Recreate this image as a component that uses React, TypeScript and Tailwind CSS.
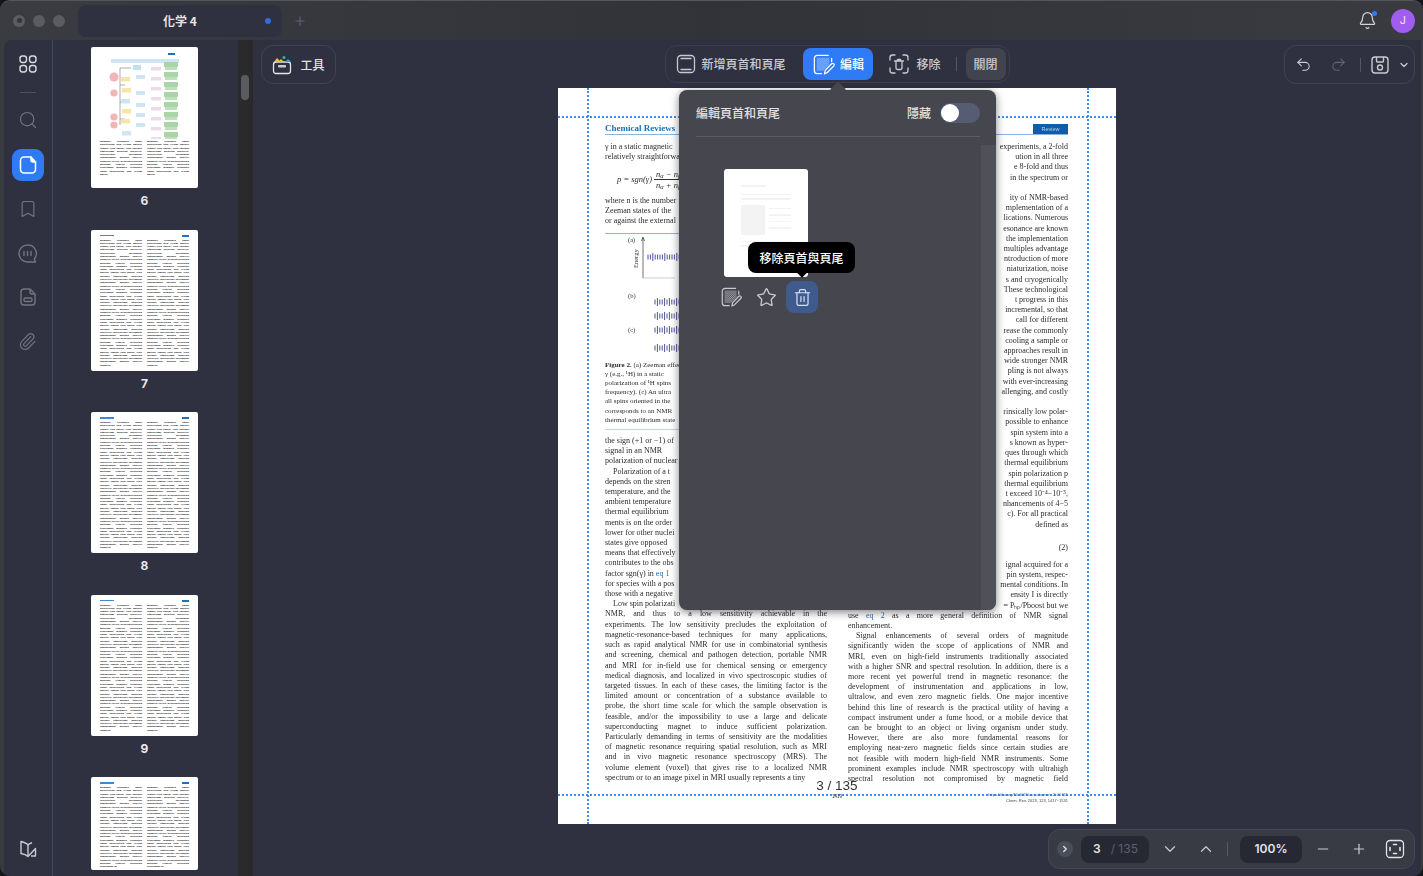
import React from 'react'
import { Bell, Bookmark, ChevronDown, ChevronRight, ChevronUp, Minus, Paperclip, Plus, Redo2, Search, Star, Trash2, Undo2 } from 'lucide-react'

const cjk = "font-['Noto_Sans_CJK_TC','Noto_Sans',sans-serif]"

const leftTop = ['γ in a static magnetic', 'relatively straightforward']
const leftMid = ['where n is the number', 'Zeeman states of the', 'or against the external']
const caption = [
  <><b>Figure 2.</b> (a) Zeeman effect</>,
  <>γ (e.g., ¹H) in a static</>,
  <>polarization of ¹H spins</>,
  <>frequency). (c) An ultra</>,
  <>all spins oriented in the</>,
  <>corresponds to an NMR</>,
  <>thermal equilibrium state</>,
]
const leftBody = [
  'the sign (+1 or −1) of', 'signal in an NMR', 'polarization of nuclear',
  '\u2003Polarization of a t', 'depends on the stren', 'temperature, and the', 'ambient temperature',
  'thermal equilibrium', 'ments is on the order', 'lower for other nuclei', 'states give opposed',
  'means that effectively', 'contributes to the obs',
]
const leftFull = [
  'NMR, and thus to a low sensitivity achievable in the',
  'experiments. The low sensitivity precludes the exploitation of',
  'magnetic-resonance-based techniques for many applications,',
  'such as rapid analytical NMR for use in combinatorial synthesis',
  'and screening, chemical and pathogen detection, portable NMR',
  'and MRI for in-field use for chemical sensing or emergency',
  'medical diagnosis, and localized in vivo spectroscopic studies of',
  'targeted tissues. In each of these cases, the limiting factor is the',
  'limited amount or concentration of a substance available to',
  'probe, the short time scale for which the sample observation is',
  'feasible, and/or the impossibility to use a large and delicate',
  'superconducting magnet to induce sufficient polarization.',
  'Particularly demanding in terms of sensitivity are the modalities',
  'of magnetic resonance requiring spatial resolution, such as MRI',
  'and in vivo magnetic resonance spectroscopy (MRS). The',
  'volume element (voxel) that gives rise to a localized NMR',
  'spectrum or to an image pixel in MRI usually represents a tiny',
]
const rightA = ['experiments, a 2-fold', 'ution in all three', 'e 8-fold and thus', 'in the spectrum or', '\u00a0']
const rightB = [
  'ity of NMR-based', 'mplementation of a', 'lications. Numerous', 'esonance are known', 'the implementation',
  'multiples advantage', 'ntroduction of more', 'niaturization, noise', 's and cryogenically', 'These technological',
  't progress in this', 'incremental, so that', 'call for different', 'rease the commonly', 'cooling a sample or',
  'approaches result in', 'wide stronger NMR', 'pling is not always', 'with ever-increasing', 'allenging, and costly', '\u00a0',
  'rinsically low polar-', 'possible to enhance', 'spin system into a', 's known as hyper-', 'ques through which',
  'thermal equilibrium', 'spin polarization p', 'thermal equilibrium', 't exceed 10⁻⁴−10⁻⁵,', 'nhancements of 4−5',
  'c). For all practical', 'defined as',
]
const rightC = ['ignal acquired for a', 'pin system, respec-', 'mental conditions. In', 'ensity I is directly', '= Pₕₚ/Pboost but we']
const rightFull = [
  '\u2003Signal enhancements of several orders of magnitude',
  'significantly widen the scope of applications of NMR and',
  'MRI, even on high-field instruments traditionally associated',
  'with a higher SNR and spectral resolution. In addition, there is a',
  'more recent yet powerful trend in magnetic resonance: the',
  'development of instrumentation and applications in low,',
  'ultralow, and even zero magnetic fields. One major incentive',
  'behind this line of research is the practical utility of having a',
  'compact instrument under a fume hood, or a mobile device that',
  'can be brought to an object or living organism under study.',
  'However, there are also more fundamental reasons for',
  'employing near-zero magnetic fields since certain studies are',
  'not feasible with modern high-field NMR instruments. Some',
  'prominent examples include NMR spectroscopy with ultrahigh',
  'spectral resolution not compromised by magnetic field',
]

const noise =
  'magnetic resonance signal polarization spin system nuclear sample field energy state thermal equilibrium detection sensitivity spectroscopy instrument enhancement method analysis chemical review hyperpolarization molecule transfer relaxation experiment '

function Line({ children, full }: { children: React.ReactNode; full?: boolean }) {
  return <div className={full ? 'whitespace-nowrap text-justify [text-align-last:justify]' : 'whitespace-nowrap'}>{children}</div>
}

function Blurb({ chars }: { chars: number }) {
  return (
    <div className="flex-1 text-justify font-['Liberation_Serif',serif] text-[2.8px] font-bold leading-[3.3px] text-[#111]">
      {noise.repeat(8).slice(0, chars)}
    </div>
  )
}

function MindMap() {
  const rows = [12, 22, 32, 42, 52, 62, 72, 82]
  return (
    <svg width="107" height="92" viewBox="0 0 107 92" className="block">
      <rect x="20" y="12" width="68" height="4" fill="#cfe6f2" />
      <rect x="42" y="18" width="8" height="5" fill="#bfe0f0" />
      <path d="M29 21V78M29 21H40M29 38H34M29 55H34M29 72H34" stroke="#777" strokeWidth="0.6" fill="none" />
      {[30, 46, 70, 78].map((y, i) => <circle key={y} cx="23" cy={y} r={i === 0 ? 4.5 : 3.6} fill="#f2b5b5" />)}
      {[30, 41, 52, 62, 72, 84].map((y, i) => <rect key={y} x={i % 2 ? 31 : 30} y={y} width="9" height="4.5" fill={i % 3 === 2 ? '#cfe6f2' : '#f7e7a6'} />)}
      {[28, 44, 56, 66, 76].map((y) => <rect key={y} x="45" y={y} width="9" height="4" fill="#cfe6f2" />)}
      {rows.map((y) => <rect key={y} x="60" y={y + 8} width="10" height="3.5" fill="#ecdbe8" />)}
      {rows.map((y) => (
        <g key={y}>
          <rect x="73" y={y + 3} width="14" height="5" fill="#a9d5a8" />
          <rect x="74" y={y + 8} width="12" height="3" fill="#bfe0bd" />
        </g>
      ))}
      <rect x="77" y="6" width="7" height="2" fill="#1e70c1" />
    </svg>
  )
}

function Thumb({ num, first, cut }: { num: number; first?: boolean; cut?: boolean }) {
  const chars = cut ? 760 : 1200
  return (
    <div className="flex flex-col items-center">
      <div className={`flex w-[107px] flex-col overflow-hidden rounded-[2px] bg-white ${cut ? 'h-[93px]' : 'h-[141px]'}`}>
        {first ? (
          <>
            <MindMap />
            <div className="mt-[1px] flex gap-[5px] px-[9px]">
              <Blurb chars={310} />
              <Blurb chars={310} />
            </div>
          </>
        ) : (
          <>
            <div className="flex justify-between px-[9px] pt-[5px]">
              <div className="h-[1.5px] w-[14px] bg-[#3d8ad0]" />
              <div className="h-[2px] w-[7px] bg-[#1e70c1]" />
            </div>
            <div className="mt-[2px] flex gap-[5px] px-[9px]">
              <Blurb chars={chars} />
              <Blurb chars={chars} />
            </div>
          </>
        )}
      </div>
      {!cut && <div className="mt-[6px] font-['Inter',sans-serif] text-[12px] font-bold leading-[13px] text-[#e8e8ea]">{num}</div>}
    </div>
  )
}

function RailIcon({ children, active }: { children: React.ReactNode; active?: boolean }) {
  return (
    <div className={`flex h-8 w-8 items-center justify-center rounded-[9px] ${active ? 'bg-[#2f7bf6] text-white' : 'text-[#72757f]'}`}>
      {children}
    </div>
  )
}

function EditIcon({ size = 24 }: { size?: number }) {
  return (
    <svg width={size} height={size} viewBox="0 0 24 24" fill="none" stroke="currentColor" strokeWidth="1.3">
      <defs>
        <pattern id="dither" width="2" height="2" patternUnits="userSpaceOnUse">
          <rect width="1" height="1" fill="currentColor" stroke="none" />
          <rect x="1" y="1" width="1" height="1" fill="currentColor" stroke="none" />
        </pattern>
      </defs>
      <path d="M17 2.5H5.5a3 3 0 0 0-3 3v13a3 3 0 0 0 3 3H10M20.5 5.5V9" strokeLinecap="round" />
      <path d="M5 5h13v7l-6 6.5H5z" fill="url(#dither)" stroke="none" opacity="0.55" />
      <path d="M13 21.8l.8-3.6 6.7-7a1.6 1.6 0 0 1 2.3 2.2l-6.8 7z" strokeLinejoin="round" />
    </svg>
  )
}

function Divider() {
  return <div className="h-[14px] w-px bg-[#555863]" />
}

function Figure() {
  const ticks = (x0: number, x1: number, y: number) => {
    let d = ''
    for (let x = x0; x < x1; x += 2.4) d += `M${x} ${y - (Math.round(x) % 4 === 0 ? 4 : 2.5)}V${y + (Math.round(x) % 4 === 0 ? 4 : 2.5)}`
    return d
  }
  return (
    <svg width="100" height="127" viewBox="0 0 100 127" className="block">
      <g fontFamily="Liberation Serif, serif" fontSize="6.5" fill="#333">
        <text x="23" y="8">(a)</text>
        <text x="23" y="64">(b)</text>
        <text x="23" y="98">(c)</text>
        <text transform="translate(33 34) rotate(-90)">Energy</text>
      </g>
      <path d="M38 44V4M36.5 7L38 3l1.5 4" stroke="#333" strokeWidth="0.7" fill="none" />
      <path d="M38 44H70" stroke="#999" strokeWidth="0.5" />
      <path d={ticks(43, 76, 23) + ticks(50, 76, 68) + ticks(50, 76, 82) + ticks(50, 76, 96) + ticks(50, 76, 114)} stroke="#3a3f8f" strokeWidth="0.9" />
    </svg>
  )
}

function Page() {
  return (
    <div className="relative flex h-[736px] w-[558px] flex-col bg-white px-[47px] pt-[35px] pr-[48px] font-['Liberation_Serif',serif] text-[8px] leading-[10.2px] text-[#2c2c2c] blur-[0.3px]">
      {/* guides */}
      <div className="absolute left-0 right-0 top-[28px] border-t-2 border-dotted border-[#3f8cf0]" />
      <div className="absolute left-0 right-0 top-[706px] border-t-2 border-dotted border-[#3f8cf0]" />
      <div className="absolute bottom-0 left-[29px] top-0 border-l-2 border-dotted border-[#3f8cf0]" />
      <div className="absolute bottom-0 right-[27px] top-0 border-l-2 border-dotted border-[#3f8cf0]" />

      <div className="flex h-[12px] items-end justify-between border-b border-[#8ab4dc]">
        <div className="text-[9px] font-bold leading-[11px] text-[#1f6fb5]">Chemical Reviews</div>
        <div className="flex h-[10px] w-[35px] items-center justify-center bg-[#0f5ca8] font-['Liberation_Sans',sans-serif] text-[5.5px] text-[#b9d3ec]">Review</div>
      </div>

      <div className="mt-[7px] grid grid-cols-[222px_220px] gap-[21px]">
        <div>
          {leftTop.map((t) => <Line key={t}>{t}</Line>)}
          <div className="flex h-[33.6px] items-center gap-[2px] pl-[12px] text-[8.5px] italic">
            <span>p = sgn(γ)</span>
            <span className="flex flex-col items-center leading-[10px]">
              <span className="border-b border-[#333] px-[2px]">n<sub>α</sub> − n<sub>β</sub></span>
              <span className="px-[2px]">n<sub>α</sub> + n<sub>β</sub></span>
            </span>
          </div>
          {leftMid.map((t) => <Line key={t}>{t}</Line>)}
          <div className="mt-[6px] h-px bg-[#8ab4dc]" />
          <Figure />
          <div className="text-[7px] leading-[9.2px]">
            {caption.map((c, i) => <Line key={i}>{c}</Line>)}
          </div>
          <div className="mb-[6px] mt-[4px] h-px bg-[#c5d7ea]" />
          {leftBody.map((t) => <Line key={t}>{t}</Line>)}
          <Line>factor sgn(γ) in <span className="text-[#2a6db5]">eq 1</span></Line>
          <Line>for species with a pos</Line>
          <Line>those with a negative</Line>
          <Line>{'\u2003'}Low spin polarizati</Line>
          {leftFull.map((t, i) => <Line key={t} full={i < 16}>{t}</Line>)}
        </div>
        <div>
          {rightA.map((t, i) => <div key={i} className="whitespace-nowrap text-right">{t}</div>)}
          {rightB.map((t, i) => <div key={i} className="whitespace-nowrap text-right">{t}</div>)}
          <div className="mt-[13px] text-right leading-[10px]">(2)</div>
          <div className="mt-[7px]">
            {rightC.map((t) => <div key={t} className="whitespace-nowrap text-right">{t}</div>)}
          </div>
          <Line full>use <span className="text-[#2a6db5]">eq 2</span> as a more general definition of NMR signal</Line>
          <Line>enhancement.</Line>
          {rightFull.map((t) => <Line key={t} full>{t}</Line>)}
        </div>
      </div>

      {/* page stamp + footer */}
      <div className="absolute left-0 right-0 top-[690px] text-center font-['Liberation_Sans',sans-serif] text-[13.5px] leading-[16px] text-[#333]">3 / 135</div>
      <div className="absolute left-0 right-0 top-[706px] text-center font-['Liberation_Sans',sans-serif] text-[4.5px] leading-[6px] text-[#333]">1419</div>
      <div className="absolute right-[48px] top-[704px] text-right font-['Liberation_Sans',sans-serif] text-[4px] leading-[5.5px]">
        <div className="text-[#2a6db5]">https://doi.org/10.1021/acs.chemrev.2c00741</div>
        <div className="text-[#444]">Chem. Rev. 2023, 123, 1417−1531</div>
      </div>
    </div>
  )
}

function Popover() {
  return (
    <div className={`absolute left-[426px] top-[50px] h-[520px] w-[317px] rounded-lg bg-[#45464e] shadow-[0_2px_8px_rgba(0,0,0,0.5)] ${cjk}`}>
      <div className="absolute -top-[6px] left-[153px] h-3 w-3 rotate-45 rounded-[2px] bg-[#45464e]" />
      <div className="absolute bottom-0 right-0 top-[55px] w-[15px] rounded-br-lg bg-[#4f5058]" />
      <div className="relative mx-[17px] mr-[16px] flex h-[47px] items-center justify-between border-b border-[#565c6e] text-[12px] font-medium text-[#e2e2e4]">
        <span>編輯頁首和頁尾</span>
        <div className="flex items-center gap-[9px]">
          <span>隱藏</span>
          <div className="flex h-[20px] w-[40px] items-center rounded-full bg-[#565d72] pl-[1px]">
            <div className="h-[18px] w-[18px] rounded-full bg-white" />
          </div>
        </div>
      </div>
      <div className="relative ml-[45px] mt-[32px] w-[84px]">
        <div className="flex h-[108px] w-[84px] flex-col gap-[3px] rounded-[3px] bg-white px-[17px] pt-[16px]">
          <div className="h-[1.5px] w-[25px] bg-[#f3f3f3]" />
          <div className="mt-[4px] h-[1.5px] bg-[#f3f3f3]" />
          <div className="h-[1.5px] bg-[#f3f3f3]" />
          <div className="mt-[2px] flex gap-[4px]">
            <div className="h-[30px] w-[24px] bg-[#f3f3f3]" />
            <div className="flex flex-1 flex-col gap-[5px] pt-[3px]">
              <div className="h-[1.5px] bg-[#f3f3f3]" />
              <div className="h-[1.5px] bg-[#f3f3f3]" />
              <div className="h-[1.5px] bg-[#f3f3f3]" />
              <div className="h-[1.5px] bg-[#f3f3f3]" />
            </div>
          </div>
          <div className="mt-[3px] h-[1.5px] bg-[#f3f3f3]" />
          <div className="h-[1.5px] bg-[#f3f3f3]" />
        </div>
        <div className="mt-[4px] flex h-[32px] w-[102px] -translate-x-[8px] items-center text-[#c9cad0]">
          <div className="flex w-[30px] justify-center"><EditIcon size={22} /></div>
          <div className="ml-[5px] flex w-[30px] justify-center"><Star size={21} strokeWidth={1.5} /></div>
          <div className="ml-[5px] flex h-[32px] w-[32px] items-center justify-center rounded-lg bg-[#3f5a8c] text-[#d6e2f8]">
            <Trash2 size={19} strokeWidth={1.5} />
          </div>
        </div>
        <div className="absolute left-[24px] top-[73px] flex h-[31px] w-[107px] items-center justify-center rounded-lg bg-black text-[12px] font-medium text-white">
          移除頁首與頁尾
          <div className="absolute -bottom-[3px] left-[50px] h-2 w-2 rotate-45 bg-black" />
        </div>
      </div>
    </div>
  )
}

export default function App() {
  return (
    <div className="h-screen w-screen overflow-hidden bg-[#15161a]">
      <div className="flex h-full flex-col overflow-hidden rounded-[10px] border-t border-[#55565c] bg-[#3a3b41]">
        {/* title bar */}
        <div className="flex h-[39px] shrink-0 items-center bg-gradient-to-r from-[#3b3c42] via-[#323338] to-[#3a3b40] pl-[13px] pr-[8px]">
          <div className="flex gap-[8px]">
            <div className="flex h-3 w-3 items-center justify-center rounded-full bg-[#5b5c61]"><div className="h-[5px] w-[5px] rounded-full bg-[#35363b]" /></div>
            <div className="h-3 w-3 rounded-full bg-[#5b5c61]" />
            <div className="h-3 w-3 rounded-full bg-[#5b5c61]" />
          </div>
          <div className={`relative ml-[13px] flex h-[32px] w-[204px] items-center justify-center rounded-lg bg-[#2f3140] text-[12px] font-bold text-[#e6e6e8] ${cjk}`}>
            化学 4
            <div className="absolute right-[11px] top-[13px] h-[6px] w-[6px] rounded-full bg-[#2f6fd8]" />
          </div>
          <Plus size={14} className="ml-[11px] text-[#5d6270]" />
          <div className="ml-auto flex items-center gap-[14px]">
            <div className="relative text-[#d5d5d8]">
              <Bell size={19} strokeWidth={1.5} />
              <div className="absolute right-0 top-0 h-[5px] w-[5px] rounded-full bg-[#2f7bf6]" />
            </div>
            <div className="flex h-6 w-6 items-center justify-center rounded-full bg-[#a15cf0] font-['Inter',sans-serif] text-[11px] text-[#f1e6ff]">J</div>
          </div>
        </div>

        <div className="flex min-h-0 flex-1 pl-[4px] pr-[2px]">
          {/* rail */}
          <div className="flex w-[49px] shrink-0 flex-col items-center rounded-tl-lg border-r border-[#434a5e] bg-[#2f3140] pr-[1px] pt-[8px]">
            <RailIcon>
              <svg width="20" height="20" viewBox="0 0 20 20" fill="none" stroke="#d9dae0" strokeWidth="1.4">
                <rect x="2" y="2" width="6.5" height="6.5" rx="2.4" />
                <rect x="11.5" y="2" width="6.5" height="6.5" rx="2.4" />
                <rect x="2" y="11.5" width="6.5" height="6.5" rx="2.4" />
                <rect x="11.5" y="11.5" width="6.5" height="6.5" rx="2.4" />
              </svg>
            </RailIcon>
            <div className="my-[11.5px] h-px w-4 bg-[#4c4f5c]" />
            <RailIcon><Search size={20} strokeWidth={1.4} /></RailIcon>
            <div className="mt-[13px]">
              <RailIcon active>
                <svg width="20" height="20" viewBox="0 0 20 20" fill="none" stroke="currentColor" strokeWidth="1.5">
                  <path d="M13 2H6a3.500 3.500 0 0 0-3.500 3.500v9A3.500 3.500 0 0 0 6 18h8a3.500 3.500 0 0 0 3.500-3.500V7" strokeLinecap="round" />
                  <path d="M13 2v3a2 2 0 0 0 2 2h2.500z" fill="currentColor" strokeLinejoin="round" />
                </svg>
              </RailIcon>
            </div>
            <div className="mt-[12px]"><RailIcon><Bookmark size={20} strokeWidth={1.4} /></RailIcon></div>
            <div className="mt-[12px]">
              <RailIcon>
                <svg width="21" height="21" viewBox="0 0 21 21" fill="none" stroke="currentColor" strokeWidth="1.4" strokeLinecap="round">
                  <path d="M10.500 2a8.500 8.500 0 1 0 0 17H18.500l-1.200-3a8.500 8.500 0 0 0-6.800-14z" strokeLinejoin="round" />
                  <path d="M7 8.500v4M10.500 8.500v4M14 8.500v4" />
                </svg>
              </RailIcon>
            </div>
            <div className="mt-[12px]">
              <RailIcon>
                <svg width="20" height="20" viewBox="0 0 20 20" fill="none" stroke="currentColor" strokeWidth="1.4">
                  <path d="M12 2H6a3 3 0 0 0-3 3v10a3 3 0 0 0 3 3h8a3 3 0 0 0 3-3V7z" strokeLinejoin="round" />
                  <path d="M12 2v3a2 2 0 0 0 2 2h3" />
                  <rect x="6" y="11" width="8" height="3.500" rx="1.200" />
                </svg>
              </RailIcon>
            </div>
            <div className="mt-[12px]"><RailIcon><Paperclip size={19} strokeWidth={1.4} /></RailIcon></div>
            <div className="mb-[17px] mt-auto text-[#c9cad0]">
              <svg width="20" height="20" viewBox="0 0 20 20" fill="none" stroke="currentColor" strokeWidth="1.400">
                <path d="M3 2.500c3 .8 6 2 7 3.500v11.500c-1.500-1.500-4-2.500-7-3z" strokeLinejoin="round" />
                <path d="M10 6c1-1 2.500-1.800 4-2.200M13 17h4.500V9.500L10 17.500" strokeLinejoin="round" />
              </svg>
            </div>
          </div>

          {/* thumbnails */}
          <div className="flex w-[185px] shrink-0 flex-col items-center overflow-hidden bg-[#2f3140] pr-[2px] pt-[7px]">
            <div className="flex flex-col items-center gap-[22.5px]">
              <Thumb num={6} first />
              <Thumb num={7} />
              <Thumb num={8} />
              <Thumb num={9} />
              <Thumb num={10} cut />
            </div>
          </div>
          <div className="w-[15px] shrink-0 bg-[#2a2a2c] pl-[3px] pt-[35px]">
            <div className="h-[25px] w-2 rounded-full bg-[#5a5b60]" />
          </div>

          {/* main */}
          <div className="relative flex min-w-0 flex-1 flex-col items-center bg-[#2f3140]">
            <div className="grid h-[48px] w-full shrink-0 grid-cols-[1fr_auto_1fr] items-start pl-2 pr-[6px] pt-[5px]">
              <div className={`flex h-[39px] w-[75px] items-center justify-center gap-[8px] rounded-xl border border-[#3f4352] text-[12px] font-medium text-[#e2e3e7] ${cjk}`}>
                <svg width="20" height="20" viewBox="0 0 20 20" fill="none">
                  <rect x="1.500" y="7" width="17" height="11.500" rx="2.500" stroke="#e6e6ea" strokeWidth="1.300" />
                  <rect x="6" y="10" width="8" height="2.500" rx="0.800" fill="#c9cad0" />
                  <path d="M2 7l3-4 2 2 1 2z" fill="#f2c230" />
                  <circle cx="12" cy="2.500" r="1.500" fill="#22c29a" />
                  <path d="M13 7l3-3 3 3z" fill="#2aa5e8" />
                  <path d="M6 7l3-3 3 3z" fill="#f2c230" />
                </svg>
                工具
              </div>
              <div className={`flex h-[38px] w-[345px] -translate-x-[1px] items-center rounded-xl border border-[#3a3e4d] pl-[10px] pr-[3px] text-[12px] font-medium text-[#c9cad0] ${cjk}`}>
                <svg width="20" height="20" viewBox="0 0 20 20" fill="none" stroke="currentColor" strokeWidth="1.300">
                  <rect x="1.500" y="1.500" width="17" height="17" rx="3.500" />
                  <path d="M5 4.500h10M5 15.500h10" strokeLinecap="round" />
                </svg>
                <span className="ml-[6px]">新增頁首和頁尾</span>
                <div className="ml-[17px] flex h-8 w-[71px] items-center justify-center gap-[5px] rounded-lg bg-[#2f7bf6] text-white">
                  <EditIcon size={23} />
                  編輯
                </div>
                <svg className="ml-[15px]" width="22" height="22" viewBox="0 0 22 22" fill="none" stroke="currentColor" strokeWidth="1.300" strokeLinecap="round">
                  <path d="M2 7V4.500A2.500 2.500 0 0 1 4.500 2H7M15 2h2.500A2.500 2.500 0 0 1 20 4.500V7M20 15v2.500a2.500 2.500 0 0 1-2.500 2.500H15M7 20H4.500A2.500 2.500 0 0 1 2 17.500V15" />
                  <path d="M6.500 8h9M8 8v7a1.500 1.500 0 0 0 1.500 1.500h3A1.500 1.500 0 0 0 14 15V8M9.500 8V6.500h3V8" strokeLinejoin="round" />
                </svg>
                <span className="ml-[6px]">移除</span>
                <div className="ml-[15px]"><Divider /></div>
                <div className="ml-[9px] flex h-8 w-10 items-center justify-center rounded-lg bg-[#41444f]">關閉</div>
              </div>
              <div className="flex h-[39px] w-[131px] items-center justify-self-end rounded-xl border border-[#3f4352] pl-[10px] text-[#c9cad0]">
                <Undo2 size={17} strokeWidth={1.5} />
                <Redo2 size={17} strokeWidth={1.5} className="ml-[18px] text-[#62656f]" />
                <div className="ml-[13px]"><Divider /></div>
                <svg className="ml-[9px]" width="20" height="20" viewBox="0 0 20 20" fill="none" stroke="currentColor" strokeWidth="1.400">
                  <path d="M5 2h10a3 3 0 0 1 3 3v10a3 3 0 0 1-3 3H5a3 3 0 0 1-3-3V5a3 3 0 0 1 3-3z" />
                  <path d="M6.500 2v4a1 1 0 0 0 1 1h5a1 1 0 0 0 1-1V2" />
                  <circle cx="10" cy="12.500" r="2.500" />
                </svg>
                <ChevronDown size={12} strokeWidth={2.500} className="ml-[8px]" />
              </div>
            </div>

            <Page />
            <Popover />

            {/* bottom bar */}
            <div className="absolute bottom-[7px] right-[6px] flex h-10 w-[367px] items-center rounded-xl border border-[#464954] bg-[#383a44] pl-[8px] font-['Inter',sans-serif] text-[12px] font-semibold text-[#e4e4e8]">
              <div className="flex h-4 w-4 items-center justify-center rounded-full bg-[#4a4d5a]"><ChevronRight size={10} strokeWidth={3} /></div>
              <div className="ml-[8px] flex h-[27px] w-[68px] items-center rounded-lg bg-[#262833] pl-[12px]">
                3<span className="ml-[10px] font-normal text-[#5d616e]">/ 135</span>
              </div>
              <ChevronDown size={18} strokeWidth={1.6} className="ml-[12px] text-[#c9cad0]" />
              <ChevronUp size={18} strokeWidth={1.6} className="ml-[18px] text-[#c9cad0]" />
              <div className="ml-[12px]"><Divider /></div>
              <div className="ml-[12px] flex h-[27px] w-[62px] items-center justify-center rounded-lg bg-[#262833]">100%</div>
              <Minus size={16} strokeWidth={1.8} className="ml-[13px] text-[#c9cad0]" />
              <Plus size={16} strokeWidth={1.8} className="ml-[20px] text-[#c9cad0]" />
              <svg className="ml-[18px]" width="20" height="20" viewBox="0 0 20 20" fill="none" stroke="#e4e4e8" strokeWidth="1.300">
                <rect x="1.500" y="1.500" width="17" height="17" rx="3.500" />
                <path d="M8.500 5.500h3M8.500 14.500h3M5 8.500v3M15 8.500v3" strokeWidth="1.600" strokeLinecap="round" />
              </svg>
            </div>
          </div>
        </div>
      </div>
    </div>
  )
}
